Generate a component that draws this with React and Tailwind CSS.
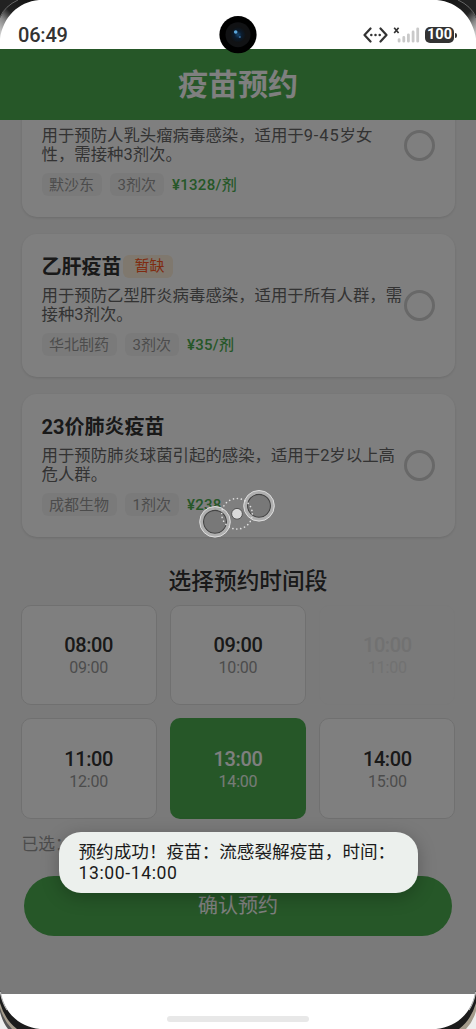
import React, { useState } from "react";

const vaccines = [
  {
    id: 1,
    desc: ["用于预防人乳头瘤病毒感染，适用于9-45岁女", "性，需接种3剂次。"],
    maker: "默沙东",
    doses: "3剂次",
    price: "¥1328/剂",
  },
  {
    id: 2,
    name: "乙肝疫苗",
    shortage: true,
    desc: ["用于预防乙型肝炎病毒感染，适用于所有人群，需", "接种3剂次。"],
    maker: "华北制药",
    doses: "3剂次",
    price: "¥35/剂",
  },
  {
    id: 3,
    name: "23价肺炎疫苗",
    desc: ["用于预防肺炎球菌引起的感染，适用于2岁以上高", "危人群。"],
    maker: "成都生物",
    doses: "1剂次",
    price: "¥238",
  },
];

const slots = [
  { start: "08:00", end: "09:00" },
  { start: "09:00", end: "10:00" },
  { start: "10:00", end: "11:00", disabled: true },
  { start: "11:00", end: "12:00" },
  { start: "13:00", end: "14:00" },
  { start: "14:00", end: "15:00" },
];

function StatusBar() {
  return (
    <div className="flex h-[49px] shrink-0 items-end justify-between bg-white pr-[19px] pl-[18px]">
      <span className="mb-[2px] text-[20px] leading-[24px] font-medium tracking-[-0.2px] text-[#333]">06:49</span>
      <div className="mb-[6px] flex items-center">
        <svg width="25" height="16" viewBox="0 0 25 16" fill="none" stroke="#333" strokeWidth="2.2" strokeLinecap="round" strokeLinejoin="round">
          <path d="M7.5 1.5 1.5 8l6 6.5M17.5 1.5l6 6.5-6 6.5" />
          <path d="M8.3 8h.01M12.5 8h.01M16.7 8h.01" strokeWidth="2.5" />
        </svg>
        <svg className="ml-[5px]" width="27" height="16" viewBox="0 0 27 16" fill="none">
          <path d="M1.2 .8l4.4 5.2M5.6 .8l-4.4 5.2" stroke="#333" strokeWidth="1.7" />
          <path d="M6.1 12.6v1.6M10.8 10.5v3.7M15.4 7.8v6.4M20.1 5v9.2M24.7 1.8v12.4" stroke="#c9c9c9" strokeWidth="2.8" strokeLinecap="round" />
        </svg>
        <div className="ml-[5px] flex h-[16px] w-[29px] items-center justify-center rounded-[5px] bg-[#333] pt-px text-[14.5px] leading-none font-bold text-white">
          100
        </div>
        <div className="ml-[1px] h-[5px] w-[2px] rounded-r bg-[#333]" />
      </div>
    </div>
  );
}

function VaccineCard({ item, first }) {
  return (
    <div
      className={`flex h-[143px] shrink-0 items-center justify-between rounded-[15px] bg-white px-[20px] shadow-[0_1px_3px_rgba(0,0,0,0.12)] ${
        first ? "-mt-[46px]" : "mt-[17px]"
      }`}
    >
      <div className="w-0 grow">
        <div className="flex h-[24px] items-center">
          {item.name && <span className="pt-[3px] text-[20px] leading-[24px] font-bold text-[#333]">{item.name}</span>}
          {item.shortage && (
            <span className="mt-[2px] ml-[1px] h-[23px] rounded-[6px] bg-[#fff0dc] pr-[8px] pl-[12px] text-[15px] leading-[23px] text-[#ff5722]">
              暂缺
            </span>
          )}
        </div>
        <div className="mt-[8.6px] text-[16.4px] leading-[19.2px] whitespace-nowrap text-[#666]">
          {item.desc.map((line) => (
            <div key={line}>
              {line.split(/([\d-]{2,})/).map((part, i) => (
                <span key={i} className={i % 2 ? "tracking-[0.9px]" : ""}>{part}</span>
              ))}
            </div>
          ))}
        </div>
        <div className="mt-[8.4px] flex items-center text-[15px] leading-[23px]">
          <span className="mr-[8px] h-[23px] rounded-[6px] bg-[#f5f5f5] px-[7.5px] pt-px text-[#999]">{item.maker}</span>
          <span className="mr-[8px] h-[23px] rounded-[6px] bg-[#f5f5f5] px-[8px] pt-px text-[#999]">{item.doses}</span>
          <span className="pt-px font-medium tracking-[0.3px] text-[#4caf50]">{item.price}</span>
        </div>
      </div>
      <div className="h-[31px] w-[31px] shrink-0 rounded-full border-[3px] border-[#d0d0d0]" />
    </div>
  );
}

function slotClass(slot, active) {
  if (active) return "bg-[#4caf50] text-white";
  if (slot.disabled) return "border border-[#f2f2f2] bg-[#f5f5f5] text-[#e2e2e2]";
  return "border border-[#e0e0e0] bg-white text-[#333]";
}

function Loader() {
  return (
    <svg className="absolute top-[484px] left-[193px]" width="88" height="60" viewBox="193 484 88 60" fill="none">
      {[
        [215, 521.8],
        [259, 505.8],
      ].map(([x, y]) => (
        <g key={x}>
          <circle cx={x} cy={y} r="11.5" fill="#777777" fillOpacity="0.85" stroke="#444" strokeWidth="1.2" />
          <circle cx={x} cy={y} r="13.7" stroke="#b5b5b5" strokeOpacity="0.9" strokeWidth="3.4" />
          <circle cx={x} cy={y} r="15.3" stroke="#dddddd" strokeWidth="1" />
        </g>
      ))}
      <circle cx="237" cy="513.8" r="15.3" stroke="#dedede" strokeWidth="1.6" strokeLinecap="round" strokeDasharray="0.1 3.9" />
      <circle cx="237" cy="513.8" r="5.4" fill="#dadada" stroke="#555" strokeWidth="1" />
    </svg>
  );
}

function PhoneFrame() {
  return (
    <svg className="absolute inset-0" width="476" height="1029" viewBox="0 0 476 1029" fill="none">
      <defs>
        <linearGradient id="rim" gradientUnits="userSpaceOnUse" x1="36" y1="0" x2="0" y2="38">
          <stop offset="0" stopColor="#111" />
          <stop offset="0.5" stopColor="#222" />
          <stop offset="0.7" stopColor="#888" />
          <stop offset="1" stopColor="#ddd" />
        </linearGradient>
        <linearGradient id="rimRight" gradientUnits="userSpaceOnUse" x1="440" y1="0" x2="476" y2="38">
          <stop offset="0" stopColor="#111" />
          <stop offset="0.55" stopColor="#222" />
          <stop offset="0.75" stopColor="#888" />
          <stop offset="1" stopColor="#ddd" />
        </linearGradient>
        <radialGradient id="lens">
          <stop offset="0" stopColor="#17476f" />
          <stop offset="0.45" stopColor="#0b1c2f" />
          <stop offset="1" stopColor="#101112" />
        </radialGradient>
      </defs>
      {/* corners */}
      <path d="M0 0H39C18 2 3 17 0 39Z" fill="url(#rim)" />
      <path d="M0 0H18Q5 6 0 18Z" fill="#222" />
      <path d="M0 17Q5 6 18 0" stroke="#666" strokeWidth="1" />
      <path d="M476 0H437C458 2 473 17 476 39Z" fill="url(#rimRight)" />
      <path d="M476 0H458Q471 6 476 18Z" fill="#222" />
      <path d="M476 17Q471 6 458 0" stroke="#666" strokeWidth="1" />
      <path d="M0 990C3 1011 18 1027 40 1029H0Z" fill="#1c1c1c" />
      <path d="M0.4 992Q2 1002 7 1010" stroke="#bbb" strokeWidth="1.2" />
      <path d="M0 1003Q5 1020 17 1029H0Z" fill="#a59c8c" />
      <path d="M0 1008Q4 1021 12 1029H0Z" fill="#555" />
      <path d="M0 1012Q3 1023 8 1029H0Z" fill="#eee" />
      <path d="M476 990C473 1011 458 1027 436 1029H476Z" fill="#1c1c1c" />
      <path d="M475.6 992Q474 1002 469 1010" stroke="#bbb" strokeWidth="1.2" />
      <path d="M476 1003Q471 1020 459 1029H476Z" fill="#a59c8c" />
      <path d="M476 1011Q473 1022 466 1029H476Z" fill="#eee" />
      {/* front camera */}
      <circle cx="238" cy="34.7" r="18.6" fill="#000" />
      <circle cx="238" cy="34.7" r="12.5" fill="#111214" />
      <circle cx="238" cy="34.7" r="8" fill="url(#lens)" />
      <circle cx="235.7" cy="32" r="1.8" fill="#5ca8dc" />
      <circle cx="239.8" cy="37" r="1.1" fill="#376c9c" />
    </svg>
  );
}

export default function App() {
  const [selected, setSelected] = useState(4);

  return (
    <div className="relative flex h-[1029px] w-[476px] flex-col overflow-hidden bg-white font-['Roboto','Noto_Sans_CJK_SC',sans-serif]">
      <StatusBar />

      <div className="relative flex h-[944.5px] shrink-0 flex-col bg-[#f5f5f5]">
        <h1 className="flex h-[70.5px] shrink-0 items-center justify-center bg-[#4caf50] pt-[2px] text-[30px] leading-none font-bold text-white">
          疫苗预约
        </h1>

        <div className="flex grow flex-col overflow-hidden px-[21.5px]">
          {vaccines.map((item, i) => (
            <VaccineCard key={item.id} item={item} first={i === 0} />
          ))}

          <h2 className="mt-[31px] pl-[20px] text-center text-[22.7px] leading-[28px] font-medium text-[#333]">选择预约时间段</h2>

          <div className="-mx-px mt-[9px] grid grid-cols-3 gap-[13px]">
            {slots.map((slot, i) => (
              <button
                key={slot.start}
                disabled={slot.disabled}
                onClick={() => setSelected(i)}
                className={`flex h-[100.5px] flex-col items-center justify-center rounded-[10px] pt-[2px] ${slotClass(slot, i === selected)}`}
              >
                <span className="text-[20px] leading-[24px] font-medium tracking-[-0.4px]">{slot.start}</span>
                <span className={`text-[16px] leading-[21px] tracking-[-0.2px] ${i === selected || slot.disabled ? "opacity-90" : "text-[#999]"}`}>
                  {slot.end}
                </span>
              </button>
            ))}
          </div>

          <div className="mt-[14.5px] text-[16.8px] leading-[22px] text-[#999]">已选：</div>
          <button className="mx-[2.5px] mt-[20.5px] h-[60px] shrink-0 rounded-full bg-[#4caf50] text-[20px] text-white">确认预约</button>
        </div>

        <div className="absolute inset-0 bg-black/50" />
      </div>

      <div className="flex grow items-end justify-center pb-[7px]">
        <div className="h-[6.5px] w-[142px] rounded-full bg-[#e8e8e8]" />
      </div>

      <Loader />

      <div className="absolute top-[831.5px] left-[58.5px] h-[61px] w-[359px] rounded-[22px] bg-[#ecf0ed] px-[20px] pt-[10px] text-[17.6px] leading-[21px] whitespace-nowrap text-[#1a1a1a] shadow-[0_4px_18px_rgba(0,0,0,0.25)]">
        <div>预约成功！疫苗：流感裂解疫苗，时间：</div>
        <div className="tracking-[0.6px]">13:00-14:00</div>
      </div>

      <PhoneFrame />
    </div>
  );
}
